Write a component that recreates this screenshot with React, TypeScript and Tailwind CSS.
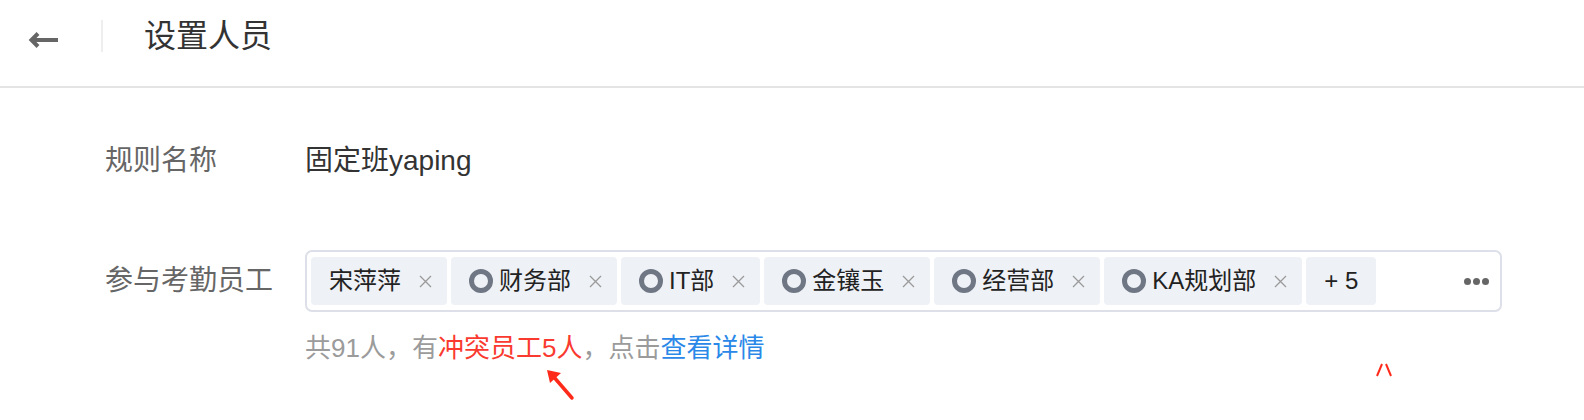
import React from 'react'

const font = { fontFamily: '"Liberation Sans", "Noto Sans CJK SC", sans-serif' }

const tags: { label: string; dept?: boolean }[] = [
  { label: '宋萍萍' },
  { label: '财务部', dept: true },
  { label: 'IT部', dept: true },
  { label: '金镶玉', dept: true },
  { label: '经营部', dept: true },
  { label: 'KA规划部', dept: true },
]

const CloseX = () => (
  <svg width="13" height="13" viewBox="0 0 13 13" className="ml-[18px] shrink-0">
    <path d="M1 1 L12 12 M12 1 L1 12" stroke="#9a9a9a" strokeWidth="1.3" fill="none" />
  </svg>
)

const App: React.FC = () => {
  return (
    <div className="relative w-[1584px] h-[420px] bg-white overflow-hidden" style={font}>
      {/* Header */}
      <div className="h-[88px] border-b-2 border-[#e4e4e4]">
        <div className="flex items-center h-[72px]">
          <button className="ml-[28px] mt-[8px] w-[30px] flex items-center cursor-pointer">
            <svg width="30" height="16" viewBox="0 0 30 16">
              <path d="M30 8 H4" stroke="#666" strokeWidth="4" fill="none" />
              <path d="M10 1.5 L3.5 8 L10 14.5" stroke="#666" strokeWidth="4" fill="none" strokeLinejoin="miter" />
            </svg>
          </button>
          <div className="ml-[43px] w-[2px] h-[32px] bg-[#eeeeee]" />
          <h1 className="ml-[41px] text-[32px] leading-none text-[#333] font-normal">设置人员</h1>
        </div>
      </div>

      {/* Body */}
      <div className="pl-[105px]">
        <div className="flex items-center h-[48px] mt-[49px]">
          <span className="w-[200px] text-[28px] text-[#666]">规则名称</span>
          <span className="text-[28px] text-[#333]">固定班yaping</span>
        </div>

        <div className="flex items-center mt-[65px]">
          <span className="w-[200px] text-[28px] text-[#666]">参与考勤员工</span>
          <div className="flex items-center w-[1197px] h-[62px] border-2 border-[#dde0e8] rounded-[7px] pl-[4px] pr-[11px]">
            <div className="flex items-center gap-[4px] flex-1">
              {tags.map((t) => (
                <div
                  key={t.label}
                  className="flex items-center h-[48px] bg-[#eef1f5] rounded-[4px] pl-[18px] pr-[15px]"
                >
                  {t.dept && (
                    <span className="w-[24px] h-[24px] rounded-full border-[5px] border-[#6f7684] mr-[6px] shrink-0" />
                  )}
                  <span className="text-[24px] text-[#222] leading-none whitespace-nowrap">{t.label}</span>
                  <CloseX />
                </div>
              ))}
              <div className="flex items-center h-[48px] bg-[#eef1f5] rounded-[4px] px-[18px]">
                <span className="text-[24px] text-[#222] leading-none whitespace-nowrap">+ 5</span>
              </div>
            </div>
            <div className="flex items-center gap-[2px]">
              <span className="w-[7px] h-[7px] rounded-full bg-[#666]" />
              <span className="w-[7px] h-[7px] rounded-full bg-[#666]" />
              <span className="w-[7px] h-[7px] rounded-full bg-[#666]" />
            </div>
          </div>
        </div>

        <p className="ml-[200px] mt-[18px] text-[26px] leading-[36px] text-[#9b9b9b] whitespace-nowrap">
          共91人，有<span className="text-[#fa3a2f]">冲突员工5人</span>，点击
          <span className="text-[#2a88e8] cursor-pointer">查看详情</span>
        </p>
      </div>

      {/* annotation marks */}
      <svg className="absolute left-[540px] top-[364px]" width="40" height="40" viewBox="0 0 40 40">
        <path d="M32 34 L13 12" stroke="#ff2a1a" strokeWidth="3.5" strokeLinecap="round" />
        <polygon points="7,6 21,9 10,19" fill="#ff2a1a" />
      </svg>
      <svg className="absolute left-[1374px] top-[362px]" width="20" height="16" viewBox="0 0 20 16">
        <path d="M8 2 L3 14" stroke="#ff2a1a" strokeWidth="2" />
        <path d="M12 2 L17 14" stroke="#ff2a1a" strokeWidth="2" />
      </svg>
    </div>
  )
}

export default App
